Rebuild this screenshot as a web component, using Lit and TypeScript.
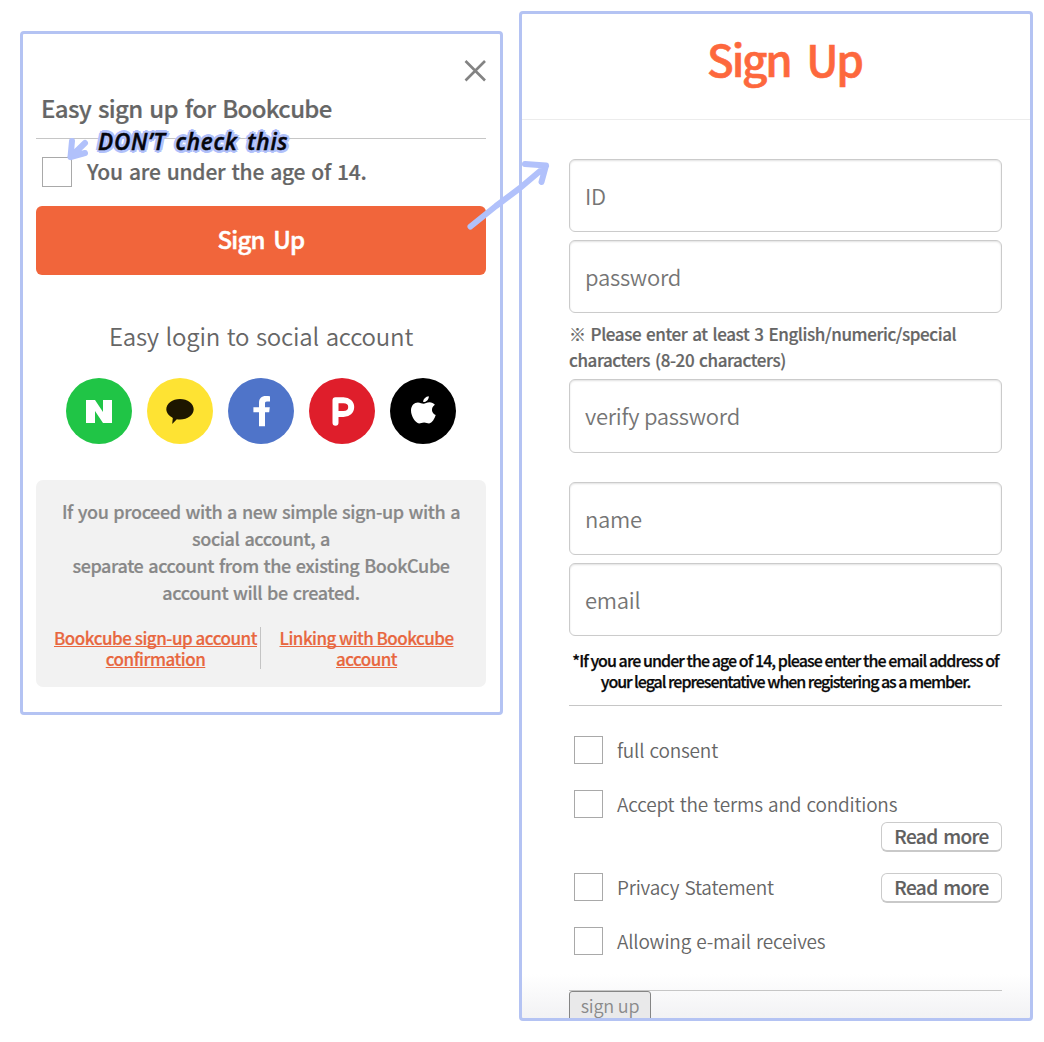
import { LitElement, html, css, svg } from "lit";
import { customElement, property } from "lit/decorators.js";

const glyphs = {
  naver: svg`<path d="M20 22h9l8 12V22h9v23h-9l-8-12v12h-9z" fill="#fff"/>`,
  kakao: svg`<path d="M33 21c7.600 0 13.700 4.600 13.700 10.300S40.600 41.600 33 41.600c-1.100 0-2.200-.1-3.200-.3L25.200 46l.6-6.100c-3.700-1.800-6.500-5-6.500-8.600C19.300 25.600 25.400 21 33 21z" fill="#1d1600"/>`,
  facebook: svg`<path d="M42 18.300v5.200h-3c-1.700 0-2 .8-2 2.300v3.400h4.800l-.6 5h-4.200V48.300h-6V34.200h-5.600v-5h5.600v-4.400c0-4.400 2.600-6.700 6.700-6.700 1.900 0 3.500.1 4.300.2z" fill="#fff"/>`,
  payco: svg`<path d="M26.500 44.800V22.300h8c4.700 0 7.700 2.700 7.700 6.700s-3.200 7-7.700 7h-8" fill="none" stroke="#fff" stroke-width="6" stroke-linejoin="round" stroke-linecap="round"/>`,
  apple: svg`<path d="M38.800 18.200c.2 3.200-2.600 6-5.600 5.900-.2-3 2.600-5.700 5.600-5.900zM44.900 26.800c-4.300 2.700-3.600 8.500.8 10.300-1 3.300-3.700 8.300-6.600 8.300-1.900 0-2.800-1-5-1-2.300 0-3.200 1-5 1-3.600 0-8.100-7.200-8.100-12.800 0-5.300 3.400-8.200 6.900-8.200 2.300 0 4 1.300 5.600 1.300 1.500 0 3.300-1.400 6.100-1.400 2 0 4 .9 5.300 2.500z" fill="#fff"/>`,
};

const socials: { name: keyof typeof glyphs; color: string }[] = [
  { name: "naver", color: "#20c546" },
  { name: "kakao", color: "#fee333" },
  { name: "facebook", color: "#4f74c9" },
  { name: "payco", color: "#df1e2b" },
  { name: "apple", color: "#000000" },
];

const base = css`
  :host {
    display: block;
    box-sizing: border-box;
    font-family: "Noto Sans CJK KR", "Noto Sans", sans-serif;
    color: #666;
  }
  *,
  *::before {
    box-sizing: border-box;
  }
  p,
  h1,
  h2 {
    margin: 0;
  }
  button {
    font-family: inherit;
    padding: 0;
    margin: 0;
  }
`;

@customElement("check-box")
export class CheckBox extends LitElement {
  static styles = css`
    :host {
      display: block;
      flex: none;
      box-sizing: border-box;
      width: 29px;
      height: 28px;
      border: 1px solid #a9a9a9;
      background: #fff;
    }
    :host([large]) {
      width: 30px;
      height: 30px;
    }
  `;
  render() {
    return html``;
  }
}

@customElement("easy-panel")
export class EasyPanel extends LitElement {
  static styles = [
    base,
    css`
      :host {
        width: 483px;
        height: 684px;
        border: 3px solid #b4c3f3;
        border-radius: 4px;
        padding: 25px 14px 0 13px;
        background: #fff;
      }
      .close-row {
        display: flex;
        justify-content: flex-end;
        height: 23px;
      }
      .close-row svg {
        display: block;
      }
      .title {
        height: 57px;
        padding: 11px 0 0 5px;
        border-bottom: 1px solid #c6c6c6;
        font-size: 24px;
        line-height: 30px;
        font-weight: 500;
        letter-spacing: -0.65px;
        word-spacing: 2px;
        -webkit-text-stroke: 0.2px #666;
      }
      .consent {
        display: flex;
        gap: 15px;
        height: 30px;
        margin-top: 18px;
        padding-left: 6px;
      }
      .consent p {
        font-size: 21px;
        line-height: 29px;
        font-weight: 500;
        letter-spacing: -0.2px;
        word-spacing: 1.5px;
        -webkit-text-stroke: 0.2px #666;
      }
      .submit {
        display: block;
        width: 100%;
        height: 69px;
        margin-top: 19px;
        padding-bottom: 4px;
        border: 0;
        border-radius: 6px;
        background: #f1653b;
        color: #fff;
        font-size: 24px;
        line-height: 30px;
        font-weight: 500;
        letter-spacing: -0.8px;
        word-spacing: 4px;
        -webkit-text-stroke: 0.5px #fff;
      }
      .social-title {
        margin-top: 46px;
        text-align: center;
        font-size: 24px;
        line-height: 30px;
        font-weight: 350;
        letter-spacing: -0.2px;
        word-spacing: 1.5px;
      }
      .socials {
        display: flex;
        justify-content: center;
        gap: 15px;
        margin-top: 27px;
      }
      .socials svg {
        display: block;
      }
      .info {
        height: 207px;
        margin-top: 36px;
        padding-top: 18px;
        border-radius: 7px;
        background: #f2f2f2;
        text-align: center;
      }
      .info p {
        font-size: 18px;
        line-height: 27px;
        font-weight: 500;
        letter-spacing: -0.4px;
        word-spacing: 1.2px;
        color: #888;
        -webkit-text-stroke: 0.2px #888;
      }
      .links {
        display: grid;
        grid-template-columns: 209px 1px 211px;
        height: 42px;
        margin-top: 21px;
        padding-left: 15px;
      }
      .links a {
        font-size: 17px;
        line-height: 21px;
        font-weight: 500;
        letter-spacing: -0.48px;
        color: #e8673f;
        -webkit-text-stroke: 0.2px #e8673f;
        white-space: nowrap;
        text-decoration: underline;
        text-decoration-skip-ink: none;
        text-decoration-thickness: 1px;
        text-underline-offset: 1px;
      }
      .links a:last-child {
        letter-spacing: -0.54px;
      }
      .links .divider {
        background: #c4c4c4;
      }
    `,
  ];
  render() {
    return html`
      <div class="close-row">
        <svg width="22" height="23" viewBox="0 0 22 23">
          <path d="M1.500 2L21 21.500M21 2L1.500 21.500" stroke="#838383" stroke-width="2.600" fill="none" />
        </svg>
      </div>
      <h2 class="title">Easy sign up for Bookcube</h2>
      <div class="consent">
        <check-box large></check-box>
        <p>You are under the age of 14.</p>
      </div>
      <button class="submit">Sign Up</button>
      <p class="social-title">Easy login to social account</p>
      <div class="socials">
        ${socials.map(
          (s) => html`<svg width="66" height="66" viewBox="0 0 66 66">
            <circle cx="33" cy="33" r="33" fill=${s.color}></circle>
            ${glyphs[s.name]}
          </svg>`
        )}
      </div>
      <div class="info">
        <p>If you proceed with a new simple sign-up with a<br />social account, a</p>
        <p>separate account from the existing BookCube<br />account will be created.</p>
        <div class="links">
          <a>Bookcube sign-up account<br />confirmation</a>
          <div class="divider"></div>
          <a>Linking with Bookcube<br />account</a>
        </div>
      </div>
    `;
  }
}

@customElement("text-field")
export class TextField extends LitElement {
  @property() label = "";
  static styles = [
    base,
    css`
      :host {
        height: 73px;
        padding: 19.500px 15px 0;
        border: 1px solid #cbcbcb;
        border-radius: 6px;
        background: #fff;
        box-shadow: inset 0 1px 2px rgba(0, 0, 0, 0.12);
        font-size: 22px;
        line-height: 30px;
        font-weight: 350;
        letter-spacing: -0.25px;
        color: #757575;
      }
      :host([tall]) {
        height: 74px;
      }
    `,
  ];
  render() {
    return html`${this.label}`;
  }
}

@customElement("signup-panel")
export class SignupPanel extends LitElement {
  static styles = [
    base,
    css`
      :host {
        width: 514px;
        height: 1010px;
        border: 3px solid #b4c3f3;
        border-radius: 4px;
        overflow: hidden;
        background: linear-gradient(#fff 960px, #f2f2f4 1004px);
      }
      .header {
        height: 106px;
        padding: 14px 0 0 17px;
        border-bottom: 1px solid #ececec;
        text-align: center;
        font-size: 44px;
        line-height: 60px;
        font-weight: 500;
        letter-spacing: -2.2px;
        word-spacing: 8px;
        color: #fd683d;
        -webkit-text-stroke: 0.6px #fd683d;
      }
      .form {
        display: flex;
        flex-direction: column;
        padding: 39px 28px 0 47px;
      }
      .fields {
        display: flex;
        flex-direction: column;
        gap: 8px;
      }
      .hint {
        margin: 8px 0 6px;
        font-size: 17px;
        line-height: 26px;
        font-weight: 500;
        letter-spacing: -0.4px;
        word-spacing: 1.5px;
        -webkit-text-stroke: 0.2px #666;
      }
      .fields.second {
        margin-top: 29px;
      }
      .legal {
        height: 70px;
        padding-top: 14px;
        border-bottom: 1px solid #c6c6c6;
        text-align: center;
        font-size: 16px;
        line-height: 20.500px;
        font-weight: 500;
        letter-spacing: -0.94px;
        color: #0a0a0a;
        -webkit-text-stroke: 0.25px #0a0a0a;
        white-space: nowrap;
      }
      .legal span {
        letter-spacing: -1.04px;
      }
      .row {
        display: flex;
        align-items: flex-start;
        height: 28px;
        padding-left: 5px;
      }
      .row p {
        flex: 1;
        padding-left: 14px;
        font-size: 19px;
        line-height: 28px;
        font-weight: 350;
        letter-spacing: -0.2px;
        word-spacing: 1.2px;
      }
      .terms {
        display: flex;
        flex-direction: column;
        margin-top: 30px;
        padding-bottom: 35px;
        border-bottom: 1px solid #c6c6c6;
      }
      .row + .row {
        margin-top: 26px;
      }
      .more {
        align-self: flex-end;
        flex: none;
        width: 121px;
        height: 30px;
        margin: 4px 0 21px;
        padding-bottom: 1px;
        border: 1px solid #cbcbcb;
        border-bottom: 2px solid #c9c9c9;
        border-radius: 6px;
        background: #fff;
        color: #5f5f5f;
        font-size: 19px;
        line-height: 26px;
        font-weight: 500;
        letter-spacing: -0.6px;
        word-spacing: 2px;
        -webkit-text-stroke: 0.2px #5f5f5f;
      }
      .row .more {
        align-self: flex-start;
        margin: 0;
      }
      .send {
        width: 82px;
        height: 36px;
        padding-bottom: 8px;
        border: 1px solid #858585;
        border-radius: 3px;
        background: #e9e9ea;
        color: #8a8a8a;
        font-size: 18px;
        line-height: 26px;
        font-weight: 350;
        letter-spacing: -0.2px;
      }
    `,
  ];
  render() {
    return html`
      <h1 class="header">Sign Up</h1>
      <div class="form">
        <div class="fields">
          <text-field label="ID"></text-field>
          <text-field label="password"></text-field>
        </div>
        <p class="hint">※ Please enter at least 3 English/numeric/special<br />characters (8-20 characters)</p>
        <text-field tall label="verify password"></text-field>
        <div class="fields second">
          <text-field label="name"></text-field>
          <text-field label="email"></text-field>
        </div>
        <p class="legal">
          *If you are under the age of 14, please enter the email address of<br /><span
            >your legal representative when registering as a member.</span
          >
        </p>
        <div class="terms">
          <div class="row"><check-box></check-box><p>full consent</p></div>
          <div class="row"><check-box></check-box><p>Accept the terms and conditions</p></div>
          <button class="more">Read more</button>
          <div class="row">
            <check-box></check-box><p>Privacy Statement</p>
            <button class="more">Read more</button>
          </div>
          <div class="row"><check-box></check-box><p>Allowing e-mail receives</p></div>
        </div>
        <button class="send">sign up</button>
      </div>
    `;
  }
}

@customElement("app-root")
export class AppRoot extends LitElement {
  static styles = [
    base,
    css`
      :host {
        position: relative;
        display: flex;
        align-items: flex-start;
        gap: 16px;
        width: 1044px;
        height: 1042px;
        padding: 11px 0 0 20px;
        background: #fff;
        overflow: hidden;
      }
      easy-panel {
        flex: none;
        margin-top: 20px;
      }
      signup-panel {
        flex: none;
      }
      .marks {
        position: absolute;
        left: 0;
        top: 0;
      }
      .marks path {
        fill: none;
        stroke: #b1c1fb;
        stroke-width: 6;
        stroke-linecap: round;
        stroke-linejoin: round;
      }
      .warning {
        position: absolute;
        left: 98px;
        top: 127px;
        font-family: "Open Sans", sans-serif;
        font-style: italic;
        font-weight: 600;
        font-size: 22.500px;
        line-height: 30px;
        letter-spacing: 0.8px;
        word-spacing: 3px;
        color: #05060c;
        white-space: nowrap;
        -webkit-text-stroke: 0.5px #05060c;
        text-shadow: 3px 0 #b1c1fb, -3px 0 #b1c1fb, 0 3px #b1c1fb, 0 -3px #b1c1fb, 2px 2px #b1c1fb, -2px 2px #b1c1fb,
          2px -2px #b1c1fb, -2px -2px #b1c1fb, 0 0 3px #b1c1fb;
      }
    `,
  ];
  render() {
    return html`
      <easy-panel></easy-panel>
      <signup-panel></signup-panel>
      <svg class="marks" width="1044" height="1042" viewBox="0 0 1044 1042">
        <path d="M470.500 226.500L496 206L520 188L546 166M525 164L546 165.500L541.500 182" />
        <path d="M85 143L70.500 157M72 141L70.500 157L85 153" />
      </svg>
      <div class="warning">DON’T check this</div>
    `;
  }
}
